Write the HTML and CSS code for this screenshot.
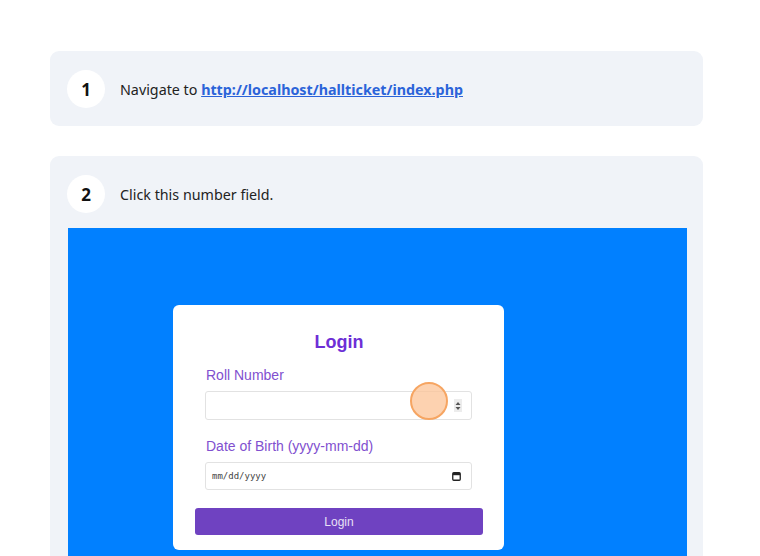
FILE: index.html
```html
<!DOCTYPE html>
<html>
<head>
<meta charset="utf-8">
<link rel="stylesheet" href="styles.css">
</head>
<body>
<div class="page">
  <div class="step">
    <div class="step-head">
      <div class="num">1</div>
      <div class="step-text">Navigate to <a class="link" href="#">http://localhost/hallticket/index.php</a></div>
    </div>
  </div>
  <div class="step step2">
    <div class="step-head">
      <div class="num">2</div>
      <div class="step-text">Click this number field.</div>
    </div>
    <div class="shot">
      <div class="login-card">
        <div class="login-title">Login</div>
        <div class="field-label">Roll Number</div>
        <div class="input num-input">
          <div class="spinner">
            <svg width="6" height="10" viewBox="0 0 6 10"><path d="M0.5 4 L3 1 L5.5 4 Z M0.5 6 L3 9 L5.5 6 Z" fill="#555"/></svg>
          </div>
          <div class="click-dot"></div>
        </div>
        <div class="field-label dob-label">Date of Birth (yyyy-mm-dd)</div>
        <div class="input date-input">
          <span class="date-ph">mm/dd/yyyy</span>
          <svg class="cal" width="9" height="9" viewBox="0 0 9 9"><rect x="0.75" y="0.75" width="7.5" height="7.5" rx="1" fill="none" stroke="#222" stroke-width="1.3"/><rect x="1" y="1" width="7" height="2.2" fill="#222"/></svg>
        </div>
        <div class="login-btn">Login</div>
      </div>
    </div>
  </div>
</div>
</body>
</html>
```

FILE: styles.css
```css
html, body {
  margin: 0;
  padding: 0;
  background: #ffffff;
  overflow: hidden;
}
body {
  font-family: "Noto Sans", "Open Sans", sans-serif;
  color: #1e1e1e;
}
.page {
  padding: 51px 0 0 50px;
  width: 653px;
}
.step {
  background: #f0f3f8;
  border-radius: 9px;
  padding: 19px 16px 18px 17px;
}
.step2 {
  margin-top: 30px;
  padding-bottom: 0;
  padding-left: 18px;
  height: 400px;
}
.step-head {
  display: flex;
  align-items: center;
  gap: 15px;
}
.step2 .step-head {
  margin-left: -1px;
}
.num {
  width: 38px;
  height: 38px;
  border-radius: 50%;
  background: #ffffff;
  display: flex;
  align-items: center;
  justify-content: center;
  font-weight: 700;
  font-size: 17px;
  color: #111;
}
.step-text {
  font-size: 14.3px;
  color: #222;
}
.link {
  color: #2b63d9;
  font-weight: 700;
  text-decoration: underline;
}
.shot {
  margin-top: 15px;
  width: 619px;
  height: 330px;
  background: #0180ff;
  padding-top: 77px;
  padding-left: 105px;
  box-sizing: border-box;
}
.login-card {
  width: 331px;
  height: 245px;
  background: #ffffff;
  border-radius: 6px;
  box-sizing: border-box;
  padding: 26px 21px 0 22px;
  font-family: "Liberation Sans", Arial, sans-serif;
}
.login-title {
  text-align: center;
  font-weight: 700;
  font-size: 18px;
  color: #6d2fd6;
  line-height: 22px;
}
.field-label {
  margin: 14px 0 0 11px;
  font-size: 14px;
  line-height: 16px;
  color: #8150cf;
}
.dob-label {
  margin-top: 18px;
}
.input {
  position: relative;
  margin: 8px 0 0 10px;
  width: 267px;
  height: 29px;
  box-sizing: border-box;
  border: 1px solid #e2e2e2;
  border-radius: 3px;
  background: #fff;
  display: flex;
  align-items: center;
}
.num-input {
  justify-content: flex-end;
  padding-right: 9px;
}
.spinner {
  width: 8px;
  height: 13px;
  background: #ececec;
  display: flex;
  align-items: center;
  justify-content: center;
}
.click-dot {
  position: absolute;
  left: 204px;
  top: -10px;
  width: 38px;
  height: 38px;
  box-sizing: border-box;
  border-radius: 50%;
  background: rgba(252, 195, 150, 0.75);
  border: 2px solid #f6a562;
}
.date-input {
  height: 28px;
  justify-content: space-between;
  padding: 0 10px 0 6px;
}
.dob-label + .date-input {
  margin-top: 8px;
}
.date-ph {
  font-family: "DejaVu Sans Mono", monospace;
  font-size: 9px;
  color: #444;
}
.login-btn {
  margin-top: 18px;
  width: 288px;
  height: 27px;
  border-radius: 3px;
  background: #6f42c1;
  color: #e8e0f5;
  font-size: 12px;
  display: flex;
  align-items: center;
  justify-content: center;
}
```
